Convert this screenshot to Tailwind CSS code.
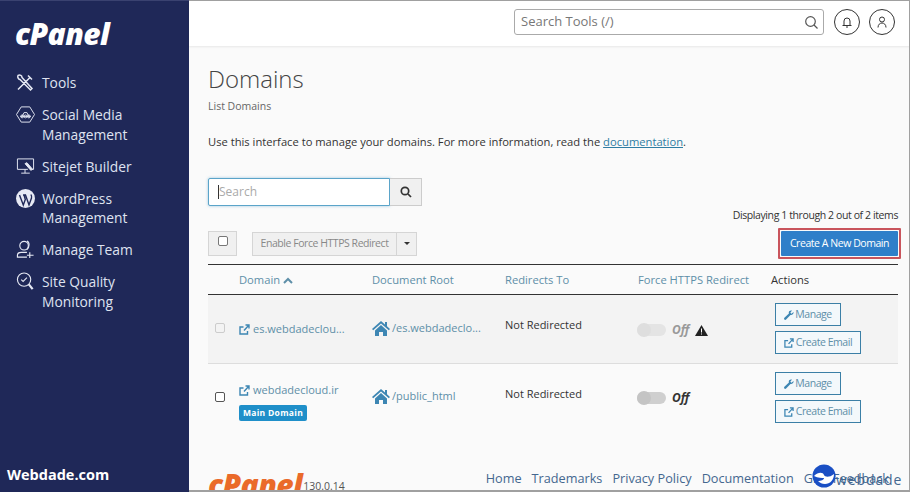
<!DOCTYPE html>
<html lang="en">
<head>
    <meta charset="UTF-8">
    <meta name="viewport" content="width=device-width, initial-scale=1.0">
    <title>cPanel - Domains</title>
    <script src="https://cdn.jsdelivr.net/npm/@tailwindcss/browser@4"></script>
</head>
<body class="font-['Open_Sans',sans-serif] overflow-hidden">
<div class="relative flex h-[492px] w-[910px] overflow-hidden bg-[#fafafa]">

    <!-- Sidebar -->
    <aside class="flex w-[189px] shrink-0 flex-col border-t border-[#3a4270] bg-[#1f2858] text-[#dfe3f0]">
        <div class="h-[72px] pl-[15px] pt-[13px] text-[30px] leading-[40px] font-extrabold italic tracking-[-0.6px] text-white">cPanel</div>
        <nav class="flex flex-col gap-[12.5px] pl-[16px] text-[13.800px] leading-[19.5px]">
            <div class="flex gap-[7px]">
                <svg class="h-[19px] w-[19px] shrink-0" viewBox="0 0 19 18" fill="none" stroke="#e6e9f4" stroke-width="1.5"><path d="M2 16L14 4M12 2l4 4M2 2c2-1 4 0 4 2l10 11-1.500 1.500L4 6C3 6 1 4 2 2z"/></svg>
                <span>Tools</span>
            </div>
            <div class="flex gap-[7px]">
                <svg class="h-[19px] w-[19px] shrink-0" viewBox="0 0 19 20" fill="none" stroke="#e6e9f4" stroke-width="1"><path d="M5 2h9l5 8-5 8H5L0 10z"/><path d="M4 12h11M6 12l2-4h3l2 4"/><circle cx="6" cy="12" r="1.5"/><circle cx="9.500" cy="12" r="1.500"/><circle cx="13" cy="12" r="1.500"/></svg>
                <span>Social Media<br>Management</span>
            </div>
            <div class="flex gap-[7px]">
                <svg class="h-[19px] w-[19px] shrink-0" viewBox="0 0 19 20" fill="none" stroke="#e6e9f4" stroke-width="1"><path d="M12 13H1V2h17v11h-2M5 17h9M9 13v4"/><path d="M9 7l6 7 2-1-6-7z" fill="#e6e9f4"/></svg>
                <span>Sitejet Builder</span>
            </div>
            <div class="flex gap-[7px]">
                <svg class="h-[19px] w-[19px] shrink-0" viewBox="0 0 19 19"><circle cx="9.500" cy="9.500" r="9.500" fill="#e6e9f4"/><path d="M3.500 6l3.800 10 2-5.500L8 6M7 6h3M9.500 6l3.500 10 2.500-7c.5-1.500 0-2.500-.6-3.500" fill="none" stroke="#1f2858" stroke-width="1.400"/></svg>
                <span>WordPress<br>Management</span>
            </div>
            <div class="flex gap-[7px]">
                <svg class="h-[19px] w-[19px] shrink-0" viewBox="0 0 19 20" fill="none" stroke="#e6e9f4" stroke-width="1.200"><circle cx="8" cy="6" r="4.500"/><path d="M11 1c3 1 3 7 0 9M11 13H5c-2.500 0-4 1.500-4 3v2h10M14 13v6M11 16h7"/></svg>
                <span>Manage Team</span>
            </div>
            <div class="flex gap-[7px]">
                <svg class="h-[19px] w-[19px] shrink-0" viewBox="0 0 19 20" fill="none" stroke="#e6e9f4" stroke-width="1.200"><circle cx="8" cy="8" r="7"/><path d="M5 8l2 2 4-4"/><path d="M13 13l4 5" stroke-width="2.400"/></svg>
                <span>Site Quality<br>Monitoring</span>
            </div>
        </nav>
        <div class="mt-auto pb-[6px] pl-[7px] text-[14.500px] leading-[22px] font-bold text-white">Webdade.com</div>
    </aside>

    <div class="flex min-w-0 flex-1 flex-col">
        <!-- Top bar -->
        <header class="flex h-[46px] shrink-0 items-center bg-white pr-[15px] pb-[2px] pl-[325px] shadow-[0_1px_2px_rgba(0,0,0,0.08)]">
            <div class="flex h-[26px] w-[310px] items-center justify-between rounded-[3px] border border-[#aaaaaa] pr-[5px] pl-[6px] text-[13px] text-[#777777]">
                <span>Search Tools (/)</span>
                <svg class="h-[13px] w-[13px]" viewBox="0 0 13 13" fill="none" stroke="#555555" stroke-width="1.200"><circle cx="5.500" cy="5.500" r="4.800"/><path d="M9 9l3.500 3.500"/></svg>
            </div>
            <div class="ml-[10px] flex h-[26px] w-[26px] items-center justify-center rounded-full border border-[#333333]">
                <svg class="h-[12px] w-[12px]" viewBox="0 0 12 12" fill="none" stroke="#333333"><path d="M1.500 9.500h9M3 9.500V5a3 3 0 016 0v4.500M5 11h2"/></svg>
            </div>
            <div class="ml-[9px] flex h-[26px] w-[26px] items-center justify-center rounded-full border border-[#333333]">
                <svg class="h-[12px] w-[12px]" viewBox="0 0 12 12" fill="none" stroke="#333333"><circle cx="6" cy="3.500" r="2.500"/><path d="M2 11.500c0-6 8-6 8 0"/></svg>
            </div>
        </header>

        <!-- Page body -->
        <main class="flex min-h-0 flex-1 flex-col pr-[12px] pl-[19px]">
            <h1 class="mt-[17px] text-[24px] leading-[32px] font-light text-[#444444]">Domains</h1>
            <p class="mt-[3px] text-[10.500px] leading-[16px] text-[#666666]">List Domains</p>
            <p class="mt-[20px] text-[11.200px] leading-[16px] text-[#333333]">Use this interface to manage your domains. For more information, read the <span class="text-[#2f7da3] underline">documentation</span>.</p>

            <div class="mt-[28px] flex h-[28px]">
                <div class="flex w-[182px] items-center rounded-l-[2px] border border-[#5ba4c9] bg-white pl-[10px] text-[12px] text-[#aaaaaa] shadow-[0_0_3px_rgba(91,164,201,0.6)]"><span class="-ml-px h-[14px] w-px bg-[#333333]"></span>Search</div>
                <div class="flex w-[32px] items-center justify-center border border-l-0 border-[#cccccc] bg-[#f0f0f0]">
                    <svg class="h-[12px] w-[12px]" viewBox="0 0 12 12" fill="none" stroke="#333333" stroke-width="1.700"><circle cx="5" cy="5" r="3.700"/><path d="M8 8l3 3"/></svg>
                </div>
            </div>

            <p class="mt-[1px] text-right text-[10.500px] leading-[16px] tracking-[-0.4px] text-[#333333]">Displaying 1 through 2 out of 2 items</p>

            <div class="mt-[4px] flex h-[33px] items-center">
                <div class="flex h-[25px] w-[29px] items-start justify-center border border-[#d5d5d5] bg-[#f0f0f0] pt-[4px]">
                    <span class="h-[10px] w-[10px] rounded-[2px] border border-[#777777] bg-white"></span>
                </div>
                <div class="ml-[15px] flex h-[24px] w-[145px] items-center justify-center border border-[#d5d5d5] bg-[#f0f0f0] text-[10.500px] tracking-[-0.45px] text-[#888888]">Enable Force HTTPS Redirect</div>
                <div class="flex h-[24px] w-[20px] items-center justify-center border border-l-0 border-[#d5d5d5] bg-[#f0f0f0]">
                    <span class="h-0 w-0 border-x-[3px] border-t-[3px] border-x-transparent border-t-[#333333]"></span>
                </div>
                <div class="-mr-[3px] ml-auto rounded-[1px] border-2 border-[#c9545c] p-[1px]">
                    <div class="flex h-[25px] w-[117px] items-center justify-center rounded-[1px] bg-[#2f7fc9] text-[10.500px] tracking-[-0.45px] text-white">Create A New Domain</div>
                </div>
            </div>

            <table class="mt-[4px] w-[690px] table-fixed border-collapse text-[11px] text-[#333333]">
                <colgroup>
                    <col class="w-[31px]"><col class="w-[133px]"><col class="w-[133px]"><col class="w-[133px]"><col class="w-[133px]"><col>
                </colgroup>
                <thead>
                    <tr class="h-[30px] border-y border-[#333333] text-left text-[11.200px] font-normal text-[#5e8fa8]">
                        <th></th>
                        <th class="pt-[2px] font-normal">Domain <svg class="inline h-[7px] w-[10px] align-[0px]" viewBox="0 0 10 7" fill="none" stroke="#5e8fa8" stroke-width="2"><path d="M1 6l4-4 4 4"/></svg></th>
                        <th class="pt-[2px] font-normal">Document Root</th>
                        <th class="pt-[2px] font-normal">Redirects To</th>
                        <th class="pt-[2px] font-normal">Force HTTPS Redirect</th>
                        <th class="pt-[2px] font-normal text-[#333333]">Actions</th>
                    </tr>
                </thead>
                <tbody>
                    <tr class="h-[69px] border-b border-[#dddddd] bg-[#f3f3f3] align-top">
                        <td class="pt-[28px] pl-[7px]"><span class="block h-[10px] w-[10px] rounded-[2px] border border-[#cccccc] bg-[#f3f3f3]"></span></td>
                        <td class="pt-[26px] text-[#5e8fa8]">
                            <div class="flex items-center gap-[3px]">
                                <svg class="h-[11px] w-[11px] shrink-0" viewBox="0 0 11 11" fill="none" stroke="#3d86b3" stroke-width="1.400"><path d="M8.500 7v3H1V3h3.500M5 6.500L10 1M6.500 1H10v3.500"/></svg>
                                <span>es.webdadeclou...</span>
                            </div>
                        </td>
                        <td class="pt-[25px] text-[#5e8fa8]">
                            <div class="flex items-center gap-[2px]">
                                <svg class="h-[15px] w-[18px] shrink-0" viewBox="0 0 18 15" fill="#3d86b3"><path d="M9 0L0 8l1.200 1.300L9 2.500l7.800 6.800L18 8l-3-2.700V1h-2v2.500z"/><path d="M3 9.500V15h4v-4h4v4h4V9.500L9 4z"/></svg>
                                <span>/es.webdadeclo...</span>
                            </div>
                        </td>
                        <td class="pt-[22px]">Not Redirected</td>
                        <td class="pt-[27px]">
                            <div class="-ml-px flex items-center gap-[6px]">
                                <span class="flex h-[12px] w-[29px] rounded-full bg-[#e4e4e4]"><span class="h-[14px] w-[14px] -translate-y-px rounded-full bg-[#dedede]"></span></span>
                                <span class="text-[12px] leading-[16px] font-bold text-[#999999] italic">Off</span>
                                <svg class="h-[11px] w-[13px]" viewBox="0 0 13 11"><path d="M6.500 0L13 11H0z" fill="#222222"/><path d="M6.500 3.500v4M6.500 8.500v1" stroke="#ffffff"/></svg>
                            </div>
                        </td>
                        <td class="pt-[8px] pl-[4px]">
                            <div class="flex flex-col items-start gap-[5px] text-[10.500px] tracking-[-0.45px] text-[#5e8fa8]">
                                <div class="flex h-[23px] w-[66px] items-center justify-center gap-[1px] border border-[#3b7fa6] bg-[#f3f8fb]">
                                    <svg class="h-[10px] w-[10px]" viewBox="0 0 10 10" fill="#3d86b3"><path d="M9.500 2L7.500 3.800 6.300 2.700 8 .6C6.500 0 5 .8 4.800 2.300c0 .5 0 .8.100 1.100L.4 7.800c-.5.500-.5 1.200 0 1.700s1.200.5 1.700 0l4.400-4.500C8 5.500 10 4 9.500 2z"/></svg>
                                    <span>Manage</span>
                                </div>
                                <div class="flex h-[23px] w-[86px] items-center justify-center gap-[2px] border border-[#3b7fa6] bg-[#f3f8fb]">
                                    <svg class="h-[10px] w-[10px]" viewBox="0 0 11 11" fill="none" stroke="#3d86b3" stroke-width="1.400"><path d="M8.500 7v3H1V3h3.500M5 6.500L10 1M6.500 1H10v3.500"/></svg>
                                    <span>Create Email</span>
                                </div>
                            </div>
                        </td>
                    </tr>
                    <tr class="h-[68px] align-top">
                        <td class="pt-[28px] pl-[7px]"><span class="block h-[10px] w-[10px] rounded-[2px] border border-[#555555] bg-white"></span></td>
                        <td class="pt-[18px] text-[#5e8fa8]">
                            <div class="flex items-center gap-[3px]">
                                <svg class="h-[11px] w-[11px] shrink-0" viewBox="0 0 11 11" fill="none" stroke="#3d86b3" stroke-width="1.400"><path d="M8.500 7v3H1V3h3.500M5 6.500L10 1M6.500 1H10v3.500"/></svg>
                                <span>webdadecloud.ir</span>
                            </div>
                            <span class="mt-[6px] inline-block h-[16px] w-[68px] rounded-[2px] bg-[#1f8fc9] text-center text-[8.500px] leading-[16px] font-bold tracking-[0.3px] text-white">Main Domain</span>
                        </td>
                        <td class="pt-[24px] text-[#5e8fa8]">
                            <div class="flex items-center gap-[2px]">
                                <svg class="h-[15px] w-[18px] shrink-0" viewBox="0 0 18 15" fill="#3d86b3"><path d="M9 0L0 8l1.200 1.300L9 2.500l7.800 6.800L18 8l-3-2.700V1h-2v2.500z"/><path d="M3 9.500V15h4v-4h4v4h4V9.500L9 4z"/></svg>
                                <span>/public_html</span>
                            </div>
                        </td>
                        <td class="pt-[22px]">Not Redirected</td>
                        <td class="pt-[26px]">
                            <div class="-ml-px flex items-center gap-[6px]">
                                <span class="flex h-[12px] w-[29px] rounded-full bg-[#cfcfcf]"><span class="h-[14px] w-[14px] -translate-y-px rounded-full bg-[#c4c4c4]"></span></span>
                                <span class="text-[12px] leading-[16px] font-bold text-[#333333] italic">Off</span>
                            </div>
                        </td>
                        <td class="pt-[8px] pl-[4px]">
                            <div class="flex flex-col items-start gap-[5px] text-[10.500px] tracking-[-0.45px] text-[#5e8fa8]">
                                <div class="flex h-[23px] w-[66px] items-center justify-center gap-[1px] border border-[#3b7fa6] bg-[#f3f8fb]">
                                    <svg class="h-[10px] w-[10px]" viewBox="0 0 10 10" fill="#3d86b3"><path d="M9.500 2L7.500 3.800 6.300 2.700 8 .6C6.500 0 5 .8 4.800 2.300c0 .5 0 .8.100 1.100L.4 7.800c-.5.500-.5 1.200 0 1.700s1.200.5 1.700 0l4.400-4.500C8 5.500 10 4 9.500 2z"/></svg>
                                    <span>Manage</span>
                                </div>
                                <div class="flex h-[23px] w-[86px] items-center justify-center gap-[2px] border border-[#3b7fa6] bg-[#f3f8fb]">
                                    <svg class="h-[10px] w-[10px]" viewBox="0 0 11 11" fill="none" stroke="#3d86b3" stroke-width="1.400"><path d="M8.500 7v3H1V3h3.500M5 6.500L10 1M6.500 1H10v3.500"/></svg>
                                    <span>Create Email</span>
                                </div>
                            </div>
                        </td>
                    </tr>
                </tbody>
            </table>

            <!-- Footer -->
            <footer class="mt-auto flex h-[30px] items-end justify-between pb-[3px]">
                <div class="flex items-end">
                    <span class="-mb-[9px] text-[30px] leading-[26px] font-extrabold tracking-[-0.6px] text-[#ea6a2a] italic">cPanel</span>
                    <span class="-mb-[4px] ml-[1px] text-[10.500px] leading-[14px] text-[#555555]">130.0.14</span>
                </div>
                <div class="flex gap-[10px] pr-[9px] pb-[2px] text-[12.700px] leading-[18px] text-[#44678f]">
                    <span>Home</span><span>Trademarks</span><span>Privacy Policy</span><span>Documentation</span><span class="whitespace-nowrap">Give Feedback</span>
                </div>
            </footer>
        </main>
    </div>

    <!-- Watermark over the footer -->
    <div class="absolute top-[462px] left-[811px] flex items-center">
        <svg class="h-[24px] w-[26px]" viewBox="0 0 26 24"><circle cx="13" cy="12" r="11.500" fill="#1a4fc4"/><path d="M3 12c4-4 9-4 10-1 1 2 5 3 10-1 0 6-4 10-9 10-3 0-5-1-7-3 3 0 6-1 6-3-2 0-6 0-10-2z" fill="#ffffff"/></svg>
        <span class="ml-[-1px] pt-[7px] text-[14px] tracking-[0.9px] text-[#44678f]">webdade</span>
    </div>

    <!-- Screenshot frame around the content area -->
    <div class="pointer-events-none absolute inset-y-0 right-0 left-[189px] border-t border-r border-b-2 border-[#a0a0a0]"></div>
</div>
</body>
</html>
